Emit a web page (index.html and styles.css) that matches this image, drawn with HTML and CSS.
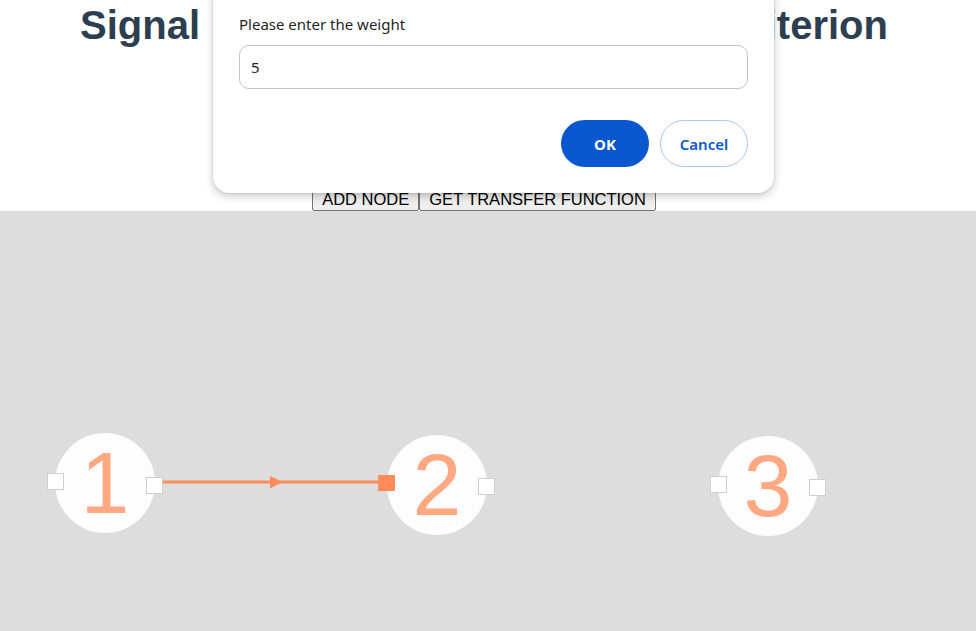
FILE: index.html
```html
<!DOCTYPE html>
<html lang="en">
<head>
<meta charset="utf-8">
<title>Signal Flow Graph</title>
<link rel="stylesheet" href="styles.css">
</head>
<body>
  <header class="header">
    <h1 class="title">Signal <span class="accent">Flow Graph using Mason's</span> Criterion</h1>
    <div class="toolbar">
      <button class="tool-btn">ADD NODE</button><button class="tool-btn">GET TRANSFER FUNCTION</button>
    </div>
  </header>

  <main class="canvas">
    <svg class="edges" width="976" height="420" viewBox="0 0 976 420">
      <line x1="160" y1="271" x2="380" y2="271" stroke="#ff8c5a" stroke-width="3"/>
      <polygon points="270,265 283,271 270,277.5" fill="#ff8c5a"/>
    </svg>

    <div class="node n1"><span class="node-label">1</span></div>
    <div class="node n2"><span class="node-label">2</span></div>
    <div class="node n3"><span class="node-label">3</span></div>

    <div class="port p1l"></div>
    <div class="port p1r"></div>
    <div class="port port-active p2l"></div>
    <div class="port p2r"></div>
    <div class="port p3l"></div>
    <div class="port p3r"></div>
  </main>

  <div class="dialog" role="dialog">
    <p class="dialog-msg">Please enter the weight</p>
    <div class="dialog-input">5</div>
    <div class="dialog-actions">
      <button class="dlg-btn dlg-ok">OK</button>
      <button class="dlg-btn dlg-cancel">Cancel</button>
    </div>
  </div>
</body>
</html>
```

FILE: styles.css
```css
html, body {
  margin: 0;
  padding: 0;
  background: #ffffff;
}

body {
  position: relative;
  width: 976px;
  height: 631px;
  overflow: hidden;
  font-family: "Liberation Sans", Arial, sans-serif;
}

.header {
  padding: 0 8px 0 0;
  display: flex;
  flex-direction: column;
  align-items: center;
}

.title {
  margin: 2px 0 0;
  font-size: 40px;
  line-height: 46px;
  font-weight: bold;
  color: #2c3e50;
  white-space: nowrap;
}

.accent {
  color: #d9a35c;
  letter-spacing: -0.35px;
}

.toolbar {
  display: flex;
  margin-top: 139px;
}

.tool-btn {
  font-family: "Liberation Sans", Arial, sans-serif;
  font-size: 16.5px;
  line-height: 18px;
  padding: 1px 9px;
  margin: 0;
  background: #efefef;
  color: #000;
  border: 1px solid #767676;
  border-radius: 2px;
  height: 24px;
}

.canvas {
  position: relative;
  height: 420px;
  background: #dddddd;
}

.edges {
  position: absolute;
  left: 0;
  top: 0;
}

.node {
  position: absolute;
  width: 100px;
  height: 100px;
  border-radius: 50%;
  background: #fdfdfd;
  display: flex;
  align-items: center;
  justify-content: center;
}

.node-label {
  font-family: "Liberation Sans", Arial, sans-serif;
  font-size: 88px;
  line-height: 100px;
  color: #ffa882;
}

.n1 { left: 55px; top: 222px; }
.n2 { left: 387px; top: 224px; }
.n3 { left: 718px; top: 225px; }

.port {
  position: absolute;
  width: 15px;
  height: 15px;
  background: #ffffff;
  border: 1px solid #cfcfcf;
  box-sizing: content-box;
}

.port-active {
  width: 17px;
  height: 16px;
  border: 0;
  background: #ff8c5a;
}

.p1l { left: 47px; top: 262px; }
.p1r { left: 146px; top: 266px; }
.p2l { left: 378px; top: 264px; }
.p2r { left: 478px; top: 267px; }
.p3l { left: 710px; top: 265px; }
.p3r { left: 809px; top: 268px; }

.dialog {
  position: absolute;
  left: 213px;
  top: -20px;
  width: 561px;
  height: 213px;
  box-sizing: border-box;
  padding: 34px 26px 26px;
  background: #ffffff;
  border-radius: 16px;
  box-shadow: 0 3px 8px rgba(0, 0, 0, 0.22), 0 0 2px rgba(0, 0, 0, 0.18);
  font-family: "Noto Sans", "Open Sans", sans-serif;
  display: flex;
  flex-direction: column;
}

.dialog-msg {
  margin: 0;
  font-size: 15px;
  line-height: 21px;
  color: #1f1f1f;
}

.dialog-input {
  margin-top: 10px;
  height: 44px;
  box-sizing: border-box;
  border: 1px solid #c4c4c4;
  border-radius: 10px;
  padding: 0 11px;
  display: flex;
  align-items: center;
  font-size: 15px;
  color: #1f1f1f;
}

.dialog-actions {
  display: flex;
  justify-content: flex-end;
  gap: 11px;
  margin-top: 31px;
}

.dlg-btn {
  width: 88px;
  height: 47px;
  border-radius: 24px;
  font-family: "Noto Sans", "Open Sans", sans-serif;
  font-size: 15px;
  font-weight: 600;
  margin: 0;
  padding: 0;
}

.dlg-ok {
  background: #0b57d0;
  color: #ffffff;
  border: 0;
  font-weight: 700;
}

.dlg-cancel {
  background: #ffffff;
  color: #0b57d0;
  border: 1px solid #a8c7fa;
}
```
